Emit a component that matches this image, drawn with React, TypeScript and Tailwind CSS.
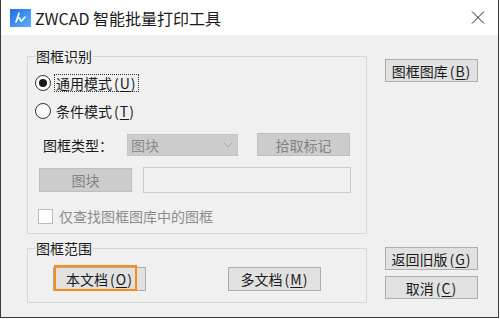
import React from 'react';

function Mn({ k }: { k: string }) {
  return (
    <span className="ml-[2px] tracking-[1px]">
      (<span className="underline underline-offset-2">{k}</span>)
    </span>
  );
}

function Btn({ label, mn, disabled, className = '' }: { label: string; mn?: string; disabled?: boolean; className?: string }) {
  return (
    <div
      className={`flex h-[23px] w-[93px] items-center justify-center border text-[14px] leading-none ${
        disabled ? 'border-[#bfbfbf] bg-[#cccccc] text-[#838383]' : 'border-[#adadad] bg-[#e1e1e1] text-[#1a1a1a]'
      } ${className}`}
    >
      {label}
      {mn && <Mn k={mn} />}
    </div>
  );
}

function GroupBox({ title, className = '', children }: { title: string; className?: string; children?: React.ReactNode }) {
  return (
    <div className={`relative border border-[#d6d6d6] ${className}`}>
      <span className="absolute left-[7px] top-[-9px] bg-[#f0f0f0] px-[1px] text-[14px] leading-[16px] text-[#1a1a1a]">{title}</span>
      {children}
    </div>
  );
}

export default function App() {
  return (
    <div className="h-[319px] w-[500px] bg-white font-['Noto_Sans_CJK_SC',sans-serif]">
      <div className="flex h-[318px] w-[499px] flex-col border-x border-b border-[#3a3a3a]">
        {/* 标题栏 */}
        <div className="flex h-[35px] items-center bg-white">
          <svg width="21" height="18" viewBox="0 0 21 18" className="ml-[9px]">
            <defs>
              <linearGradient id="zw" x1="0" y1="0" x2="1" y2="1">
                <stop offset="0" stopColor="#1f6fe0" />
                <stop offset="1" stopColor="#5fb0ff" />
              </linearGradient>
            </defs>
            <rect width="21" height="18" fill="url(#zw)" />
            <path d="M9 4 C8 7 7 10 6 13 M7 11 C8 8 10 8 10.5 11 C11 14 13 10 15 8" stroke="white" strokeWidth="1.6" fill="none" strokeLinecap="round" />
          </svg>
          <span className="ml-[4px] text-[16px] leading-none text-[#1a1a1a]">ZWCAD 智能批量打印工具</span>
          <svg width="14" height="13" viewBox="0 0 14 13" className="ml-auto mr-[13px]">
            <path d="M1 0.5 L13 12.5 M13 0.5 L1 12.5" stroke="#222" strokeWidth="1" />
          </svg>
        </div>

        {/* 主体 */}
        <div className="flex flex-1 bg-[#f0f0f0]">
          <div className="ml-[26px] flex w-[340px] flex-col pt-[21px]">
            <GroupBox title="图框识别" className="h-[178px]">
              <div className="flex flex-col pt-[17px] text-[14px] leading-none text-[#1a1a1a]">
                <div className="ml-[7px] flex h-[18px] items-center">
                  <div className="flex h-[16px] w-[16px] items-center justify-center rounded-full border border-[#333] bg-white">
                    <div className="h-[8px] w-[8px] rounded-full bg-[#1a1a1a]" />
                  </div>
                  <span className="ml-[3px] flex h-[18px] items-center border border-dotted border-[#333] px-[1px]">
                    通用模式<Mn k="U" />
                  </span>
                </div>
                <div className="ml-[7px] mt-[10px] flex h-[18px] items-center">
                  <div className="h-[16px] w-[16px] rounded-full border border-[#333] bg-white" />
                  <span className="ml-[5px]">
                    条件模式<Mn k="T" />
                  </span>
                </div>
                <div className="mt-[13px] flex h-[23px] items-center">
                  <span className="ml-[15px] w-[84px]">图框类型：</span>
                  <div className="flex h-[22px] w-[111px] items-center border border-[#c4c4c4] bg-[#cccccc] pl-[3px] text-[#8a8a8a]">
                    图块
                    <svg width="10" height="6" viewBox="0 0 10 6" className="ml-auto mr-[4px]">
                      <path d="M0.5 0.5 L5 5 L9.5 0.5" stroke="#a8a8a8" fill="none" />
                    </svg>
                  </div>
                  <Btn label="拾取标记" disabled className="ml-[19px]" />
                </div>
                <div className="mt-[11px] flex h-[26px] items-center">
                  <Btn label="图块" disabled className="ml-[11px] h-[24px]" />
                  <div className="ml-[11px] h-[26px] w-[208px] border border-[#cccccc] bg-[#f0f0f0]" />
                </div>
                <div className="ml-[10px] mt-[15px] flex h-[16px] items-center">
                  <div className="h-[15px] w-[15px] border border-[#bcbcbc] bg-white" />
                  <span className="ml-[6px] text-[#8d8d8d]">仅查找图框图库中的图框</span>
                </div>
              </div>
            </GroupBox>

            <GroupBox title="图框范围" className="mt-[14px] h-[55px]">
              <div className="flex pt-[18px]">
                <div className="relative ml-[25px]">
                  <Btn label="本文档" mn="O" className="h-[24px] w-[92px]" />
                  <div className="absolute left-[1px] top-[-2px] h-[26px] w-[83px] border-2 border-[#ff8a14]" />
                </div>
                <Btn label="多文档" mn="M" className="ml-[82px] h-[24px]" />
              </div>
            </GroupBox>
          </div>

          <div className="ml-[18px] flex flex-col pb-[18px] pt-[24px]">
            <Btn label="图框图库" mn="B" />
            <Btn label="返回旧版" mn="G" className="mt-auto" />
            <Btn label="取消" mn="C" className="mt-[6px]" />
          </div>
        </div>
      </div>
    </div>
  );
}
